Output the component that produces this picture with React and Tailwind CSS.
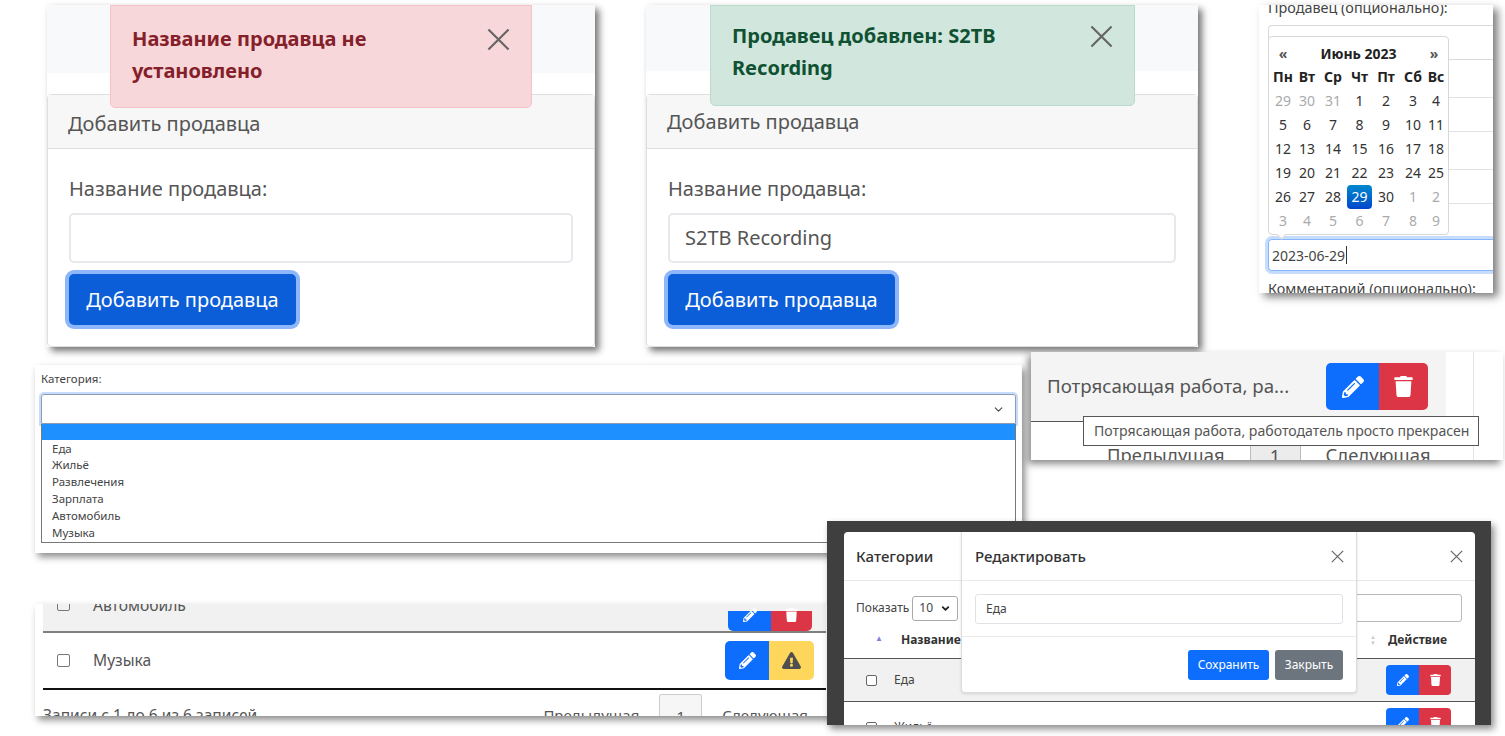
import { ChevronDown } from "lucide-react";
import { FaPencilAlt, FaTrash, FaExclamationTriangle } from "react-icons/fa";

const font = { fontFamily: '"Noto Sans", "Open Sans", sans-serif' };

function CloseIcon({ className }) {
  return (
    <svg viewBox="0 0 16 16" className={className} fill="none" stroke="currentColor" strokeWidth="1.5">
      <path d="M1 1l14 14M15 1L1 15" />
    </svg>
  );
}

function VendorPanel({ pos, band, alertPos, alertTone, alertPad, closePos, headPad, lines, value }) {
  return (
    <div className={`absolute bg-white shadow-[4px_4px_7px_rgba(0,0,0,0.55)] ${pos}`}>
      <div className={`bg-[#f8f9fa] ${band}`}></div>
      <div className="absolute left-0 right-0 bottom-0 flex flex-col rounded-[4px] border border-[#dfdfdf] bg-white">
        <div className={`flex h-[54px] items-center border-b border-[#dfdfdf] bg-[#f7f7f7] px-[20px] text-[20px] text-[#555] ${headPad}`}>
          Добавить продавца
        </div>
        <div className="flex flex-col px-[21px] pt-[26px] pb-[21px]">
          <div className="text-[20px] leading-[28px] text-[#555]">Название продавца:</div>
          <div className="mt-[10px] flex h-[50px] items-center rounded-[5px] border-2 border-[#e6e8eb] px-[15px] text-[20px] text-[#555]">
            {value}
          </div>
          <button className="mt-[11px] h-[51px] w-[227px] rounded-[5px] bg-[#0b5ed7] text-[20px] text-white ring-[4px] ring-[#8db6fb]">
            Добавить продавца
          </button>
        </div>
      </div>
      <div className={`absolute top-0 rounded-b-[5px] border ${alertPos} ${alertTone}`}>
        <div className={`pl-[21px] pr-[80px] text-[20px] font-bold leading-[32px] ${alertPad}`}>
          {lines.map((line) => (
            <div key={line}>{line}</div>
          ))}
        </div>
        <CloseIcon className={`absolute h-[23px] w-[23px] text-[#666] ${closePos}`} />
      </div>
    </div>
  );
}

function CalendarPanel() {
  const weeks = [
    ["29", "30", "31", "1", "2", "3", "4"],
    ["5", "6", "7", "8", "9", "10", "11"],
    ["12", "13", "14", "15", "16", "17", "18"],
    ["19", "20", "21", "22", "23", "24", "25"],
    ["26", "27", "28", "29", "30", "1", "2"],
    ["3", "4", "5", "6", "7", "8", "9"],
  ];
  return (
    <div className="absolute left-[1259px] top-[5px] h-[288px] w-[234px] overflow-hidden bg-white shadow-[5px_4px_8px_rgba(0,0,0,0.5)]">
      <div className="-mt-[7px] flex flex-col pl-[9px] text-[14px] text-[#444]">
        <div className="h-[20px] text-[14.4px] leading-[20px] whitespace-nowrap">Продавец (опционально):</div>
        <div className="mt-[7px] h-[35px] rounded-l-[4px] border border-r-0 border-[#d8dadd]"></div>
        <div className="h-[37px]"></div>
        <div className="h-[35px] border border-r-0 border-[#e0e2e5]"></div>
        <div className="h-[37px]"></div>
        <div className="h-[35px] border border-r-0 border-[#e0e2e5]"></div>
        <div className="h-[35px]"></div>
        <div className="flex h-[32px] items-center rounded-l-[4px] border border-r-0 border-[#86b7fe] pl-[3px] ring-[3px] ring-[#c6dcfd]">
          2023-06-29<span className="ml-px h-[18px] w-px bg-[#333]"></span>
        </div>
        <div className="mt-[8px] text-[14.4px] leading-[20px] whitespace-nowrap">Комментарий (опционально):</div>
      </div>
      <div className="absolute left-[9px] top-[31px] h-[199px] w-[181px] rounded-[4px] border border-[#d8d8d8] bg-white px-[2px] py-[4px] text-[14px] text-[#333]">
        <div className="grid h-[24px] grid-cols-[24px_1fr_24px] items-center text-center font-bold leading-[23px]">
          <span className="text-[#555]">«</span>
          <span className="text-[14px] text-[#222]">Июнь 2023</span>
          <span className="text-[#555]">»</span>
        </div>
        <div className="grid grid-cols-[24px_24px_28px_25px_28px_26px_20px] text-center font-bold leading-[24px] text-[#222] [&>span]:-mx-1">
          {["Пн", "Вт", "Ср", "Чт", "Пт", "Сб", "Вс"].map((d) => (
            <span key={d}>{d}</span>
          ))}
        </div>
        {weeks.map((week, w) => (
          <div key={w} className="grid grid-cols-[24px_24px_28px_25px_28px_26px_20px] text-center leading-[24px]">
            {week.map((day, i) => {
              const muted = (w === 0 && i < 3) || (w === 4 && i > 4) || w === 5;
              const active = w === 4 && i === 3;
              return (
                <span
                  key={i}
                  className={
                    active
                      ? "rounded-[4px] bg-gradient-to-b from-[#0088cc] to-[#0044cc] text-white"
                      : muted
                        ? "text-[#aaa]"
                        : ""
                  }
                >
                  {day}
                </span>
              );
            })}
          </div>
        ))}
        <div className="absolute -bottom-[4px] left-[9px] h-[7px] w-[7px] rotate-45 border-b border-r border-[#d8d8d8] bg-white"></div>
      </div>
    </div>
  );
}

function SelectPanel() {
  return (
    <div className="absolute left-[35px] top-[365px] flex h-[188px] w-[987px] flex-col bg-white px-[6px] pt-[6px] text-[11.5px] text-[#444] shadow-[3px_4px_7px_rgba(0,0,0,0.45)]">
      <div className="h-[16px] leading-[16px]">Категория:</div>
      <div className="mt-[7px] flex h-[30px] items-center justify-end rounded-t-[3px] border border-[#8e9bb0] pr-[10px] shadow-[0_0_0_2px_#c6dcfd]">
        <ChevronDown className="h-[13px] w-[13px] text-[#444]" strokeWidth={2} />
      </div>
      <div className="flex h-[119px] flex-col border-x border-b border-[#777] leading-[16.9px]">
        <div className="h-[16px] bg-[#1e90ff]"></div>
        <div className="flex flex-col pl-[10px] pt-[1px]">
          {["Еда", "Жильё", "Развлечения", "Зарплата", "Автомобиль", "Музыка"].map((item) => (
            <div key={item}>{item}</div>
          ))}
        </div>
      </div>
    </div>
  );
}

function TooltipPanel() {
  return (
    <div className="absolute left-[1031px] top-[352px] h-[108px] w-[472px] overflow-hidden bg-white text-[#555] shadow-[-3px_4px_7px_rgba(0,0,0,0.45)]">
      <div className="flex h-[69px] w-[415px] items-center justify-between bg-[#f4f4f4] pl-[16px] pr-[18px]">
        <span className="text-[18.7px]">Потрясающая работа, ра...</span>
        <div className="flex">
          <button className="flex h-[47px] w-[53px] items-center justify-center rounded-l-[5px] bg-[#0d6efd] text-white">
            <FaPencilAlt className="h-[22px] w-[22px]" />
          </button>
          <button className="flex h-[47px] w-[49px] items-center justify-center rounded-r-[5px] bg-[#dc3545] text-white">
            <FaTrash className="h-[21px] w-[19px]" />
          </button>
        </div>
      </div>
      <div className="h-px w-[60px] bg-[#555]"></div>
      <div className="mt-[19px] flex items-start pl-[76px] text-[18.4px] leading-[28px]">
        <span>Предыдущая</span>
        <span className="-mt-[4px] ml-[25px] flex h-[32px] w-[51px] justify-center border border-[#bbb] bg-[#ececec] pt-[4px]">1</span>
        <span className="ml-[25px]">Следующая</span>
      </div>
      <div className="absolute left-[442px] top-0 h-full w-px bg-[#e4e4e4]"></div>
      <div className="absolute left-[52px] top-[64px] flex h-[30px] w-[396px] items-center border border-[#555] bg-white pl-[10px] text-[14.1px] whitespace-nowrap">
        Потрясающая работа, работодатель просто прекрасен
      </div>
    </div>
  );
}

function TablePanel() {
  return (
    <div className="absolute left-[35px] top-[604px] h-[112px] w-[800px] overflow-hidden bg-white pl-[8px] text-[15.6px] text-[#555] shadow-[3px_4px_7px_rgba(0,0,0,0.45)]">
      <div className="flex h-[27px] w-[783px] items-end justify-between bg-[#f1f1f1] pr-[14px]">
        <div className="-mb-[2px] flex items-center pb-[16px] pl-[14px]">
          <span className="h-[12px] w-[13px] rounded-[2px] border border-[#777]"></span>
          <span className="ml-[23px]">Автомобиль</span>
        </div>
        <div className="flex">
          <span className="flex h-[20px] w-[43px] items-center justify-center rounded-bl-[5px] bg-[#0d6efd]">
            <FaPencilAlt className="h-[14px] w-[14px] -translate-y-[6px] text-white" />
          </span>
          <span className="flex h-[20px] w-[41px] items-center justify-center rounded-br-[5px] bg-[#dc3545]">
            <FaTrash className="h-[14px] w-[13px] -translate-y-[6px] text-white" />
          </span>
        </div>
      </div>
      <div className="h-[2px] w-[783px] bg-[#808080]"></div>
      <div className="flex h-[55px] w-[783px] items-center justify-between pr-[12px]">
        <div className="flex items-center pl-[14px]">
          <span className="h-[13px] w-[13px] rounded-[2px] border border-[#777]"></span>
          <span className="ml-[23px]">Музыка</span>
        </div>
        <div className="flex">
          <button className="flex h-[39px] w-[44px] items-center justify-center rounded-l-[5px] bg-[#0d6efd] text-white">
            <FaPencilAlt className="h-[17px] w-[17px]" />
          </button>
          <button className="flex h-[39px] w-[45px] items-center justify-center rounded-r-[5px] bg-[#ffd65c] text-[#4f4f4f]">
            <FaExclamationTriangle className="h-[17px] w-[19px]" />
          </button>
        </div>
      </div>
      <div className="h-[2px] w-[783px] bg-[#111]"></div>
      <div className="flex w-[765px] items-start justify-between">
        <span className="mt-[14px] leading-[22px]">Записи с 1 до 6 из 6 записей</span>
        <div className="flex items-start text-[15px]">
          <span className="mt-[14px] leading-[22px]">Предыдущая</span>
          <span className="mt-[4px] ml-[20px] flex h-[40px] w-[43px] justify-center rounded-[2px] border border-[#ccc] bg-[#f6f6f6] pt-[10px] leading-[22px]">1</span>
          <span className="mt-[14px] ml-[20px] leading-[22px]">Следующая</span>
        </div>
      </div>
    </div>
  );
}

function ModalPanel() {
  return (
    <div className="absolute left-[827px] top-[521px] h-[204px] w-[664px] overflow-hidden bg-[#3f3f3f] pl-[17px] pt-[11px] text-[#444] shadow-[3px_4px_7px_rgba(0,0,0,0.45)]">
      <div className="relative h-[200px] w-[631px] rounded-t-[4px] bg-white">
        <div className="flex h-[49px] items-center justify-between border-b border-[#e6e6e6] pl-[12px] pr-[12px]">
          <span className="text-[15px] font-medium text-[#333]">Категории</span>
          <CloseIcon className="h-[13px] w-[13px] text-[#666]" />
        </div>
        <div className="flex h-[45px] items-center justify-between pl-[12px] pr-[13px] pt-[9px] text-[12px]">
          <div className="flex items-center gap-[3px]">
            <span>Показать</span>
            <span className="flex h-[25px] w-[46px] items-center justify-between rounded-[3px] border border-[#aaa] px-[6px]">
              10 <ChevronDown className="h-[11px] w-[11px] text-[#222]" strokeWidth={4} />
            </span>
          </div>
          <div className="h-[28px] w-[106px] rounded-r-[3px] border border-[#bbb]"></div>
        </div>
        <div className="flex h-[33px] items-center border-b border-[#555] pb-[4px] pl-[12px] pr-[28px] text-[12px] font-bold text-[#333]">
          <span className="ml-[19px] -translate-y-[2px] text-[8px] text-[#8080e0]">▲</span>
          <span className="ml-[18px]">Название</span>
          <span className="ml-auto mr-[12px] flex flex-col text-[6px] leading-[6px] font-normal text-[#ccc]">
            <span>▲</span>
            <span>▼</span>
          </span>
          <span>Действие</span>
        </div>
        <div className="flex h-[43px] items-center justify-between border-b border-[#555] bg-[#f1f1f1] pl-[22px] pr-[24px] text-[12px]">
          <div className="flex items-center">
            <span className="h-[11px] w-[11px] rounded-[2px] border border-[#666] bg-white"></span>
            <span className="ml-[17px]">Еда</span>
          </div>
          <div className="flex">
            <span className="flex h-[30px] w-[33px] items-center justify-center rounded-l-[4px] bg-[#0d6efd]">
              <FaPencilAlt className="h-[12px] w-[12px] text-white" />
            </span>
            <span className="flex h-[30px] w-[32px] items-center justify-center rounded-r-[4px] bg-[#dc3545]">
              <FaTrash className="h-[12px] w-[11px] text-white" />
            </span>
          </div>
        </div>
        <div className="flex h-[30px] items-start justify-between pl-[22px] pr-[24px] pt-[6px] text-[12px]">
          <div className="mt-[10px] flex items-center">
            <span className="h-[11px] w-[11px] rounded-[2px] border border-[#666]"></span>
            <span className="ml-[17px]">Жильё</span>
          </div>
          <div className="flex">
            <span className="flex h-[30px] w-[33px] items-center justify-center rounded-l-[4px] bg-[#0d6efd]">
              <FaPencilAlt className="h-[12px] w-[12px] text-white" />
            </span>
            <span className="flex h-[30px] w-[32px] items-center justify-center rounded-r-[4px] bg-[#dc3545]">
              <FaTrash className="h-[12px] w-[11px] text-white" />
            </span>
          </div>
        </div>
        <div className="absolute left-[117px] top-0 flex h-[161px] w-[396px] flex-col rounded-b-[4px] border border-t-0 border-[#dcdcdc] bg-white shadow-[0_1px_3px_rgba(0,0,0,0.12)]">
          <div className="flex h-[49px] items-center justify-between border-b border-[#eaeaea] pl-[13px] pr-[12px]">
            <span className="text-[15px] font-medium text-[#333]">Редактировать</span>
            <CloseIcon className="h-[13px] w-[13px] text-[#666]" />
          </div>
          <div className="flex h-[56px] items-center border-b border-[#eaeaea] px-[13px]">
            <div className="flex h-[30px] w-full items-center rounded-[3px] border border-[#dfe2e6] pl-[10px] text-[12px]">Еда</div>
          </div>
          <div className="flex flex-1 items-center justify-end gap-[6px] px-[13px]">
            <button className="h-[30px] w-[81px] rounded-[3px] bg-[#0d6efd] text-[12px] text-white">Сохранить</button>
            <button className="h-[30px] w-[68px] rounded-[3px] bg-[#6c757d] text-[12px] text-white">Закрыть</button>
          </div>
        </div>
      </div>
    </div>
  );
}

export default function App() {
  return (
    <div className="relative h-[736px] w-[1505px] overflow-hidden bg-white" style={font}>
      <VendorPanel
        pos="left-[47px] top-[5px] h-[342px] w-[548px]"
        band="h-[68px]"
        alertPos="left-[63px] h-[103px] w-[422px]"
        alertTone="border-[#f5c2c7] bg-[#f8d7da] text-[#842029]"
        alertPad="pt-[17px]"
        closePos="right-[21px] top-[22px]"
        headPad="pt-[4px]"
        lines={["Название продавца не", "установлено"]}
        value=""
      />
      <VendorPanel
        pos="left-[646px] top-[5px] h-[342px] w-[552px]"
        band="h-[66px]"
        alertPos="left-[64px] h-[101px] w-[425px]"
        alertTone="border-[#badbcc] bg-[#d1e7dd] text-[#0f5132]"
        alertPad="pt-[14px]"
        closePos="right-[21px] top-[19px]"
        headPad=""
        lines={["Продавец добавлен: S2TB", "Recording"]}
        value="S2TB Recording"
      />
      <CalendarPanel />
      <SelectPanel />
      <TooltipPanel />
      <TablePanel />
      <ModalPanel />
    </div>
  );
}
